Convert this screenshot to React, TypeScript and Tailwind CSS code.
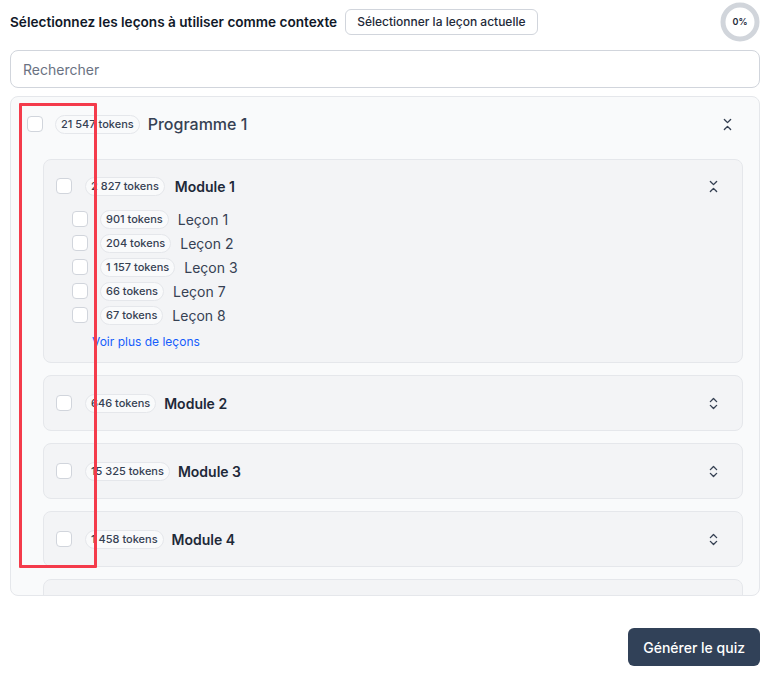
import React from "react";
import { ChevronsDownUp, ChevronsUpDown } from "lucide-react";

const Checkbox = () => (
  <span className="block w-4 h-4 shrink-0 rounded-[4px] border border-gray-300 bg-white" />
);

const Badge = ({ children }: { children: React.ReactNode }) => (
  <span className="inline-flex items-center h-[19px] px-[5px] rounded-full border border-gray-200 bg-gray-50 text-[11px] leading-none font-medium text-gray-700 whitespace-nowrap">
    {children}
  </span>
);

const lessons = [
  ["901", "Leçon 1"],
  ["204", "Leçon 2"],
  ["1 157", "Leçon 3"],
  ["66", "Leçon 7"],
  ["67", "Leçon 8"],
];

const ModuleCollapsed = ({ tokens, name }: { tokens: string; name: string }) => (
  <div className="h-[56px] shrink-0 rounded-lg border border-gray-200 bg-gray-100 flex items-center pl-3 pr-[21px]">
    <Checkbox />
    <div className="ml-[13px] flex items-center">
      <Badge>{tokens} tokens</Badge>
    </div>
    <span className="ml-2 text-[14px] font-semibold text-gray-800">{name}</span>
    <div className="flex-1" />
    <ChevronsUpDown size={15} strokeWidth={2.2} className="text-gray-700" />
  </div>
);

export default function App() {
  return (
    <div
      className="relative w-[775px] h-[677px] bg-white pl-[10px] pr-[15px]"
      style={{ fontFamily: "Inter, 'Noto Sans', sans-serif" }}
    >
      <div className="h-[44px] flex items-center">
        <span className="text-[13.6px] font-semibold text-gray-900">
          Sélectionnez les leçons à utiliser comme contexte
        </span>
        <button className="ml-2 h-[26px] px-[11px] rounded-md border border-gray-300 bg-white text-[12px] font-medium text-gray-800">
          Sélectionner la leçon actuelle
        </button>
        <div className="flex-1" />
        <div className="relative w-[40px] h-[40px] flex items-center justify-center">
          <svg width="40" height="40" viewBox="0 0 40 40" className="absolute inset-0">
            <circle cx="20" cy="20" r="17" fill="none" stroke="#d1d5db" strokeWidth="5" />
          </svg>
          <span className="relative text-[9px] font-semibold text-gray-800">0%</span>
        </div>
      </div>

      <div className="mt-[6px] h-[38px] rounded-lg border border-gray-300 bg-white flex items-center px-[12px]">
        <span className="text-[14px] text-gray-500">Rechercher</span>
      </div>

      <div className="mt-2 h-[500px] rounded-lg border border-gray-200 bg-gray-50 overflow-hidden">
        <div className="pt-[19px] pb-[27px] flex items-center h-[62px] pl-4 pr-[24px]">
          <div className="flex items-center h-4 w-full">
            <Checkbox />
            <div className="ml-3 flex items-center">
              <Badge>21 547 tokens</Badge>
            </div>
            <span className="ml-2 text-[16px] font-medium text-gray-700">Programme 1</span>
            <div className="flex-1" />
            <ChevronsDownUp size={15} strokeWidth={2.2} className="text-gray-700" />
          </div>
        </div>

        <div className="pl-8 pr-4 flex flex-col gap-3">
          <div className="rounded-lg border border-gray-200 bg-gray-100 pl-3 pr-[21px] pt-[17px] pb-[11px]">
            <div className="flex items-center h-[18px]">
              <Checkbox />
              <div className="ml-[13px] flex items-center">
                <Badge>2 827 tokens</Badge>
              </div>
              <span className="ml-[10px] text-[14px] font-semibold text-gray-800">Module 1</span>
              <div className="flex-1" />
              <ChevronsDownUp size={15} strokeWidth={2.2} className="text-gray-700" />
            </div>
            <div className="mt-[15px] pl-4 flex flex-col gap-[6px]">
              {lessons.map(([t, n]) => (
                <div key={n} className="flex items-center h-[18px]">
                  <Checkbox />
                  <div className="ml-3 flex items-center">
                    <Badge>{t} tokens</Badge>
                  </div>
                  <span className="ml-[9px] text-[14px] text-gray-700">{n}</span>
                </div>
              ))}
            </div>
            <div className="mt-[9px] pl-[36px] text-[12px] text-blue-600">Voir plus de leçons</div>
          </div>

          <ModuleCollapsed tokens="646" name="Module 2" />
          <ModuleCollapsed tokens="15 325" name="Module 3" />
          <ModuleCollapsed tokens="1 458" name="Module 4" />
          <div className="h-[56px] shrink-0 rounded-lg border border-gray-200 bg-gray-100" />
        </div>
      </div>

      <div className="mt-8 flex justify-end">
        <button className="h-[38px] px-[15px] rounded-md bg-slate-700 text-white text-[14px] font-medium">
          Générer le quiz
        </button>
      </div>

      <div className="absolute left-[19px] top-[103px] w-[78px] h-[465px] border-[3px] border-[#f43b4b] rounded-[1px] pointer-events-none" />
    </div>
  );
}
